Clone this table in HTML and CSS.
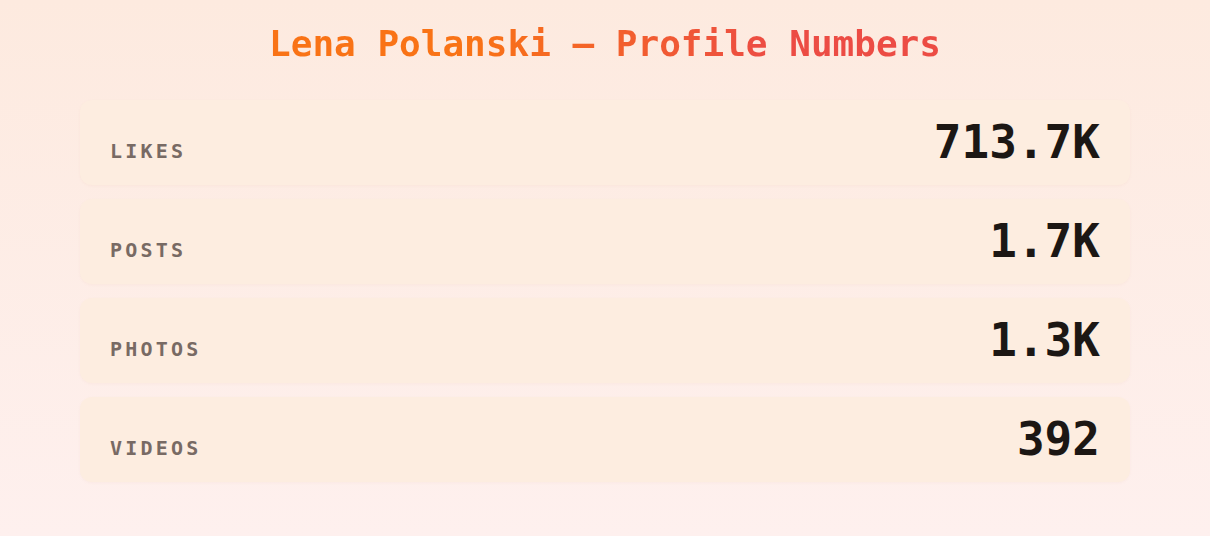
FILE: index.html
```html
<!DOCTYPE html>
<html lang="en">
<head>
<meta charset="utf-8">
<title>Lena Polanski — Profile Numbers</title>
<link rel="stylesheet" href="styles.css">
</head>
<body>
<main class="page">
  <h1 class="title">Lena Polanski — Profile Numbers</h1>
  <ul class="stats">
    <li class="stat"><span class="label">Likes</span><span class="value">713.7K</span></li>
    <li class="stat"><span class="label">Posts</span><span class="value">1.7K</span></li>
    <li class="stat"><span class="label">Photos</span><span class="value">1.3K</span></li>
    <li class="stat"><span class="label">Videos</span><span class="value">392</span></li>
  </ul>
</main>
</body>
</html>
```

FILE: styles.css
```css
html, body {
  margin: 0;
  height: 100%;
}
body {
  background: linear-gradient(180deg, #fdeadf 0%, #fef0ee 100%);
  font-family: "DejaVu Sans Mono", "Liberation Mono", monospace;
}
.page {
  padding: 21px 80px 0;
}
.title {
  text-align: center;
  font-size: 36px;
  font-weight: bold;
  line-height: 46px;
  background: linear-gradient(90deg, #f97316 30%, #ec4c44 75%);
  -webkit-background-clip: text;
  background-clip: text;
  color: transparent;
  width: fit-content;
  margin: 0 auto;
}
.stats {
  list-style: none;
  margin: 33px 0 0;
  padding: 0;
  display: flex;
  flex-direction: column;
  gap: 14px;
}
.stat {
  display: flex;
  justify-content: space-between;
  align-items: baseline;
  height: 85px;
  box-sizing: border-box;
  padding: 14px 30px 0 30px;
  background: #fdede0;
  border-radius: 12px;
  box-shadow: 0 1px 3px rgba(200, 140, 100, 0.06);
}
.label {
  text-transform: uppercase;
  font-size: 20px;
  font-weight: bold;
  letter-spacing: 3.2px;
  color: #786a64;
}
.value {
  font-size: 46px;
  font-weight: bold;
  line-height: 56px;
  color: #1c1714;
}
```
